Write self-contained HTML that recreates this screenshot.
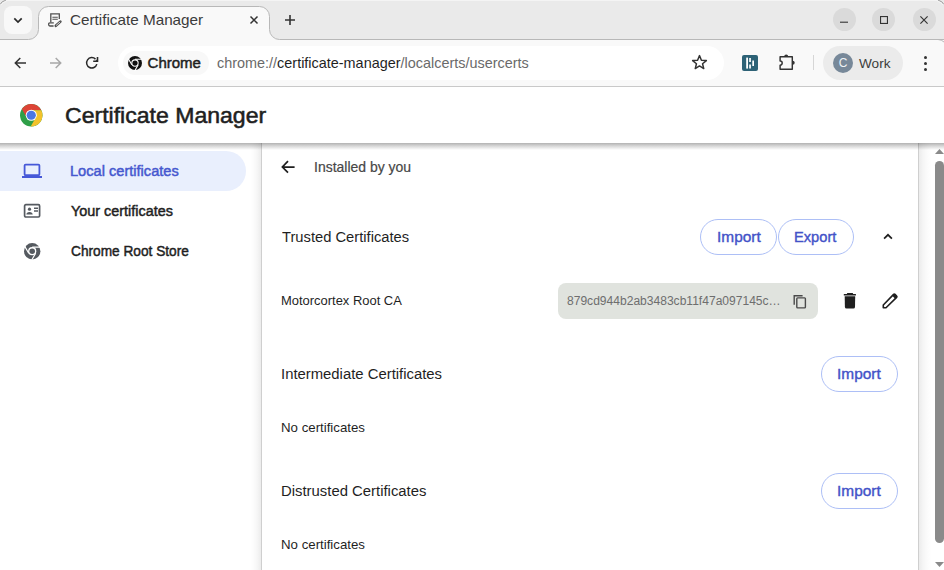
<!DOCTYPE html>
<html><head><meta charset="utf-8">
<style>
*{margin:0;padding:0;box-sizing:border-box}
html,body{width:944px;height:570px;overflow:hidden;background:#fff;font-family:"Liberation Sans",sans-serif;position:relative}
.a{position:absolute}
.t{position:absolute;white-space:nowrap;line-height:1;transform-origin:0 0}
svg{position:absolute;overflow:visible}
#titlebar{left:0;top:0;width:944px;height:40px;background:#e8e8e8}
#tabsearch{left:4px;top:6px;width:28px;height:28px;background:#f8f8f8;border-radius:8px}
#tab{left:38px;top:6px;width:232px;height:35px;background:#f9f9f9;border:1px solid #c6c6c6;border-bottom:none;border-radius:9px 9px 0 0}
#toolbar{left:0;top:40px;width:944px;height:47px;background:transparent;border-bottom:1px solid #c9c9c9}
#omni{left:118px;top:46px;width:606px;height:34px;background:#fff;border-radius:17px}
#chip{left:123px;top:51px;width:86px;height:24px;background:#f8f8f8;border-radius:12px}
.wc{top:8px;width:23px;height:23px;border-radius:50%;background:#dadada}
#work{left:823px;top:46px;width:80px;height:34px;background:#ebebeb;border-radius:17px}
#avatar{left:833px;top:53px;width:20px;height:20px;border-radius:50%;background:#778899;color:#eef2f5;font-size:12px;line-height:20px;text-align:center}
#sep{left:813px;top:55px;width:1px;height:15px;background:#d6d6d6}
#header{left:0;top:87px;width:944px;height:56px;background:#fff;z-index:2}
#hshadow{left:0;top:143px;width:944px;height:7px;background:linear-gradient(rgba(0,0,0,.30),rgba(0,0,0,.17) 40%,rgba(0,0,0,0));z-index:2}
#sel{left:0;top:151px;width:246px;height:40px;background:#e9effd;border-radius:0 20px 20px 0}
#card{left:261px;top:143px;width:658px;height:440px;background:#fff;border-left:1px solid #cfcfcf;border-right:1px solid #cfcfcf}
#lsh{left:250px;top:143px;width:11px;height:440px;background:linear-gradient(to left,rgba(0,0,0,.075),rgba(0,0,0,.035) 35%,rgba(0,0,0,.012) 70%,rgba(0,0,0,0))}
#rsh{left:919px;top:143px;width:13px;height:440px;background:linear-gradient(to right,rgba(0,0,0,.075),rgba(0,0,0,.035) 35%,rgba(0,0,0,.012) 70%,rgba(0,0,0,0))}
#strack{left:932px;top:143px;width:12px;height:427px;background:#fff}
#thumb{left:935px;top:161px;width:9px;height:382px;background:#8a8a8a;border-radius:4.5px}
.btn{position:absolute;height:36px;border:1px solid #adbff6;border-radius:18px;background:#fff}
.bt{position:absolute;white-space:nowrap;line-height:1;transform-origin:0 0;color:#4352c8;font-size:15.5px;-webkit-text-stroke:0.4px #4352c8}
#hash{left:558px;top:283px;width:260px;height:36px;background:#e0e3de;border-radius:8px}
</style></head><body>
<!-- title bar -->
<div class="a" style="left:0;top:0;width:944px;height:87px;background:#f9f9f9"></div>
<svg style="left:0;top:0" width="944" height="42" viewBox="0 0 944 42"><path d="M0 0 H944 V39.5 H279.5 A10 10 0 0 1 269.5 29.5 V16.5 A10 10 0 0 0 259.5 6.5 H48.5 A10 10 0 0 0 38.5 16.5 V29.5 A10 10 0 0 1 28.5 39.5 H0 Z" fill="#eaeaea"/><path d="M944 39.5 H279.5 A10 10 0 0 1 269.5 29.5 V16.5 A10 10 0 0 0 259.5 6.5 H48.5 A10 10 0 0 0 38.5 16.5 V29.5 A10 10 0 0 1 28.5 39.5 H0" fill="none" stroke="#b8b8b8" stroke-width="1"/><path d="M938 39.5 Q941.5 39.6 944 42" fill="none" stroke="#b8b8b8" stroke-width="1"/></svg>
<div class="a" style="left:5px;top:0;width:933px;height:1px;background:#f4f4f4"></div>
<svg style="left:0;top:0" width="10" height="10" viewBox="0 0 10 10"><path d="M0.3 4.2 Q1.5 1.2 5.8 0.3" fill="none" stroke="#9a9a9a" stroke-width="1"/><path d="M1.2 5 Q2.5 2.2 6.5 1.2" fill="none" stroke="#f6f6f6" stroke-width="1"/></svg>
<svg style="left:934px;top:0" width="10" height="10" viewBox="0 0 10 10"><path d="M9.7 4.2 Q8.5 1.2 4.2 0.3" fill="none" stroke="#9a9a9a" stroke-width="1"/><path d="M8.8 5 Q7.5 2.2 3.5 1.2" fill="none" stroke="#f6f6f6" stroke-width="1"/></svg>
<div id="tabsearch" class="a"></div>
<svg style="left:13px;top:16.5px" width="10" height="7" viewBox="0 0 10 7"><path d="M1.3 1.3 L5 5 L8.7 1.3" fill="none" stroke="#2a2a2a" stroke-width="1.7"/></svg>
<!-- tab icon -->
<svg style="left:47px;top:12px" width="16" height="16" viewBox="0 0 16 16">
<path d="M3.8 10.2 V1.9 H12.3 V7" fill="none" stroke="#505050" stroke-width="1.3"/>
<path d="M5.4 5.2 H10.8 M5.4 7.3 H10.8" stroke="#505050" stroke-width="1.1"/>
<path d="M6.8 10.9 H2.9 Q1.6 10.9 1.6 12.3 Q1.6 14 2.9 14 H6.6" fill="none" stroke="#505050" stroke-width="1.3"/>
<path d="M8.8 13.8 L13.4 9.6" stroke="#505050" stroke-width="2.6" stroke-linecap="round"/><path d="M9.4 13.2 L12.8 10.2" stroke="#f9f9f9" stroke-width="0.8" stroke-linecap="round"/>
</svg>
<div id="t_tab" class="t" style="left:70.0px;top:13.2px;font-size:14.5px;color:#3c3c3c;transform:scaleX(1.0524)">Certificate Manager</div>
<svg style="left:250px;top:16px" width="8" height="8" viewBox="0 0 8 8"><path d="M0.5 0.5 L7.5 7.5 M7.5 0.5 L0.5 7.5" stroke="#333" stroke-width="1.5"/></svg>
<svg style="left:285px;top:15px" width="10" height="10" viewBox="0 0 10 10"><path d="M5 0 V10 M0 5 H10" stroke="#333" stroke-width="1.6"/></svg>
<div class="a wc" style="left:832.5px"></div>
<div class="a wc" style="left:872.2px"></div>
<div class="a wc" style="left:912.5px"></div>
<svg style="left:840px;top:21px" width="8" height="2" viewBox="0 0 8 2"><path d="M0 1.2 H8" stroke="#333" stroke-width="1.1"/></svg>
<svg style="left:880px;top:16px" width="8" height="8" viewBox="0 0 8 8"><rect x="0.55" y="0.55" width="6.9" height="6.9" fill="none" stroke="#333" stroke-width="1.1"/></svg>
<svg style="left:920px;top:16px" width="8" height="8" viewBox="0 0 8 8"><path d="M0.4 0.4 L7.6 7.6 M7.6 0.4 L0.4 7.6" stroke="#333" stroke-width="1.15"/></svg>

<!-- toolbar -->
<div id="toolbar" class="a"></div>
<svg style="left:14px;top:57px" width="12" height="12" viewBox="0 0 12 12"><path d="M12 6 H1.5 M6.3 1 L1.3 6 L6.3 11" fill="none" stroke="#333" stroke-width="1.5"/></svg>
<svg style="left:50px;top:57px" width="12" height="12" viewBox="0 0 12 12"><path d="M0 6 H10.5 M5.7 1 L10.7 6 L5.7 11" fill="none" stroke="#a8a8a8" stroke-width="1.5"/></svg>
<svg style="left:85px;top:56px" width="14" height="14" viewBox="0 0 14 14"><path d="M11.82 8.15 A5.2 5.2 0 1 1 10.48 3.12" fill="none" stroke="#2a2a2a" stroke-width="1.5"/><path d="M8.2 5.3 H12.5 V0.9" fill="none" stroke="#2a2a2a" stroke-width="1.6"/><path d="M10.3 5.3 L12.5 3 V5.3 Z" fill="#2a2a2a"/></svg>
<div id="omni" class="a"></div>
<div id="chip" class="a"></div>
<svg style="left:128px;top:56px" width="14" height="14" viewBox="0 0 48 48">
<circle cx="24" cy="24" r="24" fill="#111"/>
<circle cx="24" cy="24" r="12.6" fill="#fff"/>
<circle cx="24" cy="24" r="9" fill="#111"/>
<path d="M24 11.4 H49 M13.1 30.3 L0.6 8.7 M34.9 30.3 L22.4 51.9" stroke="#fff" stroke-width="3.6"/>
</svg>
<div id="t_chip" class="t" style="left:147.6px;top:54.5px;font-size:15px;color:#1f1f1f;-webkit-text-stroke:0.5px #1f1f1f;transform:scaleX(1.0)">Chrome</div>
<div id="t_url" class="t" style="left:217.0px;top:56.0px;font-size:14.4px;color:#6a6a6a;transform:scaleX(1.002)">chrome://<span style="color:#1f1f1f">certificate-manager</span>/localcerts/usercerts</div>
<svg style="left:691px;top:54.2px" width="17" height="16" viewBox="0 0 24 22.6"><path d="M12 2.3 L14.7 8.8 L21.7 9.3 L16.3 13.8 L18 20.6 L12 16.9 L6 20.6 L7.7 13.8 L2.3 9.3 L9.3 8.8 Z" fill="none" stroke="#333" stroke-width="2.1" stroke-linejoin="round"/></svg>
<div class="a" style="left:742px;top:55px;width:16px;height:16px;background:#2d6276;border-radius:2px"></div>
<svg style="left:742px;top:55px" width="16" height="16" viewBox="0 0 16 16"><rect x="4.2" y="2.6" width="1.8" height="11" fill="#fff"/><rect x="7.2" y="3" width="1.7" height="4" fill="#fff"/><rect x="7.2" y="9.5" width="1.7" height="4" fill="#fff"/><rect x="10.3" y="5.5" width="1.7" height="5.5" fill="#fff"/></svg>
<svg style="left:778px;top:53px" width="19" height="19" viewBox="0 0 19 19"><path d="M2.1 3.8 H14.3 V16.3 H2.1 V12.1 A2.1 2.1 0 0 0 2.1 7.9 Z" fill="none" stroke="#333" stroke-width="1.45" stroke-linejoin="round"/><path d="M6.2 3.4 A2 2 0 0 1 10.2 3.4 Z" fill="#333"/><path d="M14.7 7.7 A2 2 0 0 1 14.7 11.7 Z" fill="#333"/></svg>
<div id="sep" class="a"></div>
<div id="work" class="a"></div>
<div id="avatar" class="a">C</div>
<div id="t_work" class="t" style="left:859.0px;top:57.1px;font-size:13.6px;color:#3c3c3c;transform:scaleX(1.0)">Work</div>
<div class="a" style="left:923.5px;top:55.5px;width:3px;height:3px;border-radius:50%;background:#333"></div>
<div class="a" style="left:923.5px;top:61.5px;width:3px;height:3px;border-radius:50%;background:#333"></div>
<div class="a" style="left:923.5px;top:67.5px;width:3px;height:3px;border-radius:50%;background:#333"></div>

<!-- page -->
<div id="sel" class="a"></div>
<div id="lsh" class="a"></div><div id="card" class="a"></div><div id="rsh" class="a"></div>
<div id="strack" class="a"></div>
<div id="thumb" class="a"></div>
<svg style="left:935px;top:149px" width="9" height="5" viewBox="0 0 9 5"><path d="M0 5 L4.5 0 L9 5Z" fill="#8a8a8a"/></svg>
<svg style="left:935px;top:562px" width="9" height="5" viewBox="0 0 9 5"><path d="M0 0 L4.5 5 L9 0Z" fill="#8a8a8a"/></svg>
<div id="header" class="a"></div><div id="hshadow" class="a"></div>
<svg style="left:19.7px;top:103.7px;z-index:3" width="22.5" height="22.5" viewBox="0 0 48 48">
<circle cx="24" cy="24" r="24" fill="#2f9f48"/>
<path d="M45.38 13.1 A24 24 0 0 0 3.87 10.93 L14.56 29.45 L24 24 L24 13.1 Z" fill="#dd4436"/>
<path d="M45.38 13.1 A24 24 0 0 0 3.87 10.93 L14.56 29.45 L24 24 L24 13.1 Z" fill="#f3c22c" transform="rotate(120 24 24)"/>
<circle cx="24" cy="24" r="11.8" fill="#fff"/>
<circle cx="24" cy="24" r="9.8" fill="#4b77e4"/>
</svg>
<div id="t_title" class="t" style="left:65.1px;top:104.5px;font-size:22.5px;color:#1f1f1f;z-index:3;-webkit-text-stroke:0.55px #1f1f1f;transform:scaleX(1.0246)">Certificate Manager</div>

<!-- sidebar -->
<svg style="left:21px;top:163px" width="22" height="16" viewBox="0 0 22 16"><rect x="3.6" y="1.6" width="14.8" height="10.6" rx="1" fill="none" stroke="#4658d8" stroke-width="1.8"/><rect x="1" y="13" width="20" height="2" fill="#4658d8"/></svg>
<div id="t_local" class="t" style="left:69.8px;top:163.0px;font-size:15.3px;color:#4658cf;-webkit-text-stroke:0.5px #4658cf;transform:scaleX(0.9548)">Local certificates</div>
<svg style="left:23px;top:203px" width="18" height="16" viewBox="0 0 18 16"><rect x="1.6" y="1.7" width="15" height="12.3" rx="1.2" fill="none" stroke="#555a60" stroke-width="1.7"/><circle cx="6.5" cy="6.2" r="1.6" fill="#555a60"/><path d="M3.3 11.6 Q3.5 9.1 6.5 9.1 Q9.5 9.1 9.7 11.6 Z" fill="#555a60"/><path d="M11 5.2 H15 M11 8 H15" stroke="#555a60" stroke-width="1.4"/></svg>
<div id="t_your" class="t" style="left:70.8px;top:203.3px;font-size:15.3px;color:#1f1f1f;-webkit-text-stroke:0.5px #1f1f1f;transform:scaleX(0.9414)">Your certificates</div>
<svg style="left:23.8px;top:242.8px" width="16.4" height="16.4" viewBox="0 0 48 48">
<circle cx="24" cy="24" r="24" fill="#555a60"/>
<circle cx="24" cy="24" r="12" fill="#fff"/>
<circle cx="24" cy="24" r="8.2" fill="#555a60"/>
<path d="M24 12.2 H48 M13.8 29.9 L1.8 9.1 M34.2 29.9 L22.2 50.7" stroke="#fff" stroke-width="3.4"/>
</svg>
<div id="t_root" class="t" style="left:70.8px;top:243.3px;font-size:15.3px;color:#1f1f1f;-webkit-text-stroke:0.5px #1f1f1f;transform:scaleX(0.8945)">Chrome Root Store</div>

<!-- card content -->
<svg style="left:281px;top:160px" width="14" height="13" viewBox="0 0 14 13"><path d="M13.6 7 H1.8 M7 1.2 L1.4 7 L7 12.6" fill="none" stroke="#1f1f1f" stroke-width="1.75"/></svg>
<div id="t_inst" class="t" style="left:313.6px;top:160.1px;font-size:14.5px;color:#474747;-webkit-text-stroke:0.2px #474747;transform:scaleX(0.964)">Installed by you</div>

<div id="t_trust" class="t" style="left:282.4px;top:228.7px;font-size:15.5px;color:#1f1f1f;transform:scaleX(0.9502)">Trusted Certificates</div>
<div class="btn" style="left:700px;top:219px;width:77px"></div>
<div id="t_imp1" class="bt" style="left:716.5px;top:228.5px;transform:scaleX(0.9956)">Import</div>
<div class="btn" style="left:778px;top:219px;width:76px"></div>
<div id="t_exp" class="bt" style="left:794.1px;top:228.5px;transform:scaleX(0.9457)">Export</div>
<svg style="left:882px;top:233px" width="12" height="7" viewBox="0 0 12 7"><path d="M2.1 5.7 L6 1.8 L9.9 5.7" fill="none" stroke="#1f1f1f" stroke-width="1.7"/></svg>

<div id="t_motor" class="t" style="left:281.1px;top:293.9px;font-size:13.3px;color:#1f1f1f;transform:scaleX(0.9734)">Motorcortex Root CA</div>
<div id="hash" class="a"></div>
<div id="t_hash" class="t" style="left:567.0px;top:295.0px;font-size:12.5px;color:#6e6e6e;transform:scaleX(0.9646)">879cd944b2ab3483cb11f47a097145c…</div>
<svg style="left:792px;top:292.5px" width="16" height="16" viewBox="0 0 16 16"><path d="M2.2 11.8 V2.7 H10.6" fill="none" stroke="#4a4a4a" stroke-width="1.4"/><rect x="4.8" y="4.9" width="8.6" height="10" rx="0.8" fill="none" stroke="#4a4a4a" stroke-width="1.4"/></svg>
<svg style="left:842px;top:292px" width="16" height="18" viewBox="0 0 16 18"><path d="M5.3 1 H10.7 L11.2 2 H13.9 V3.4 H1.8 V2 H4.8 Z" fill="#1f1f1f"/><path d="M2.7 4.3 H13.2 L13 15 Q12.9 16.5 11.4 16.5 H4.5 Q3 16.5 2.9 15 Z" fill="#1f1f1f"/></svg>
<svg style="left:881px;top:292px" width="18" height="18" viewBox="0 0 18 18"><path d="M2.3 15.7 V13 L12.6 2.4 Q13.3 1.7 14 2.4 L15.6 4 Q16.3 4.7 15.6 5.4 L5 15.7 Z" fill="none" stroke="#1f1f1f" stroke-width="1.6" stroke-linejoin="round"/><path d="M12.6 2.4 Q13.3 1.7 14 2.4 L15.6 4 Q16.3 4.7 15.6 5.4 L14.2 6.8 L11.2 3.8 Z" fill="#1f1f1f"/></svg>

<div id="t_inter" class="t" style="left:281.0px;top:366.3px;font-size:15.5px;color:#1f1f1f;transform:scaleX(0.9584)">Intermediate Certificates</div>
<div class="btn" style="left:821px;top:356px;width:77px"></div>
<div id="t_imp2" class="bt" style="left:836.9px;top:365.8px;transform:scaleX(0.9955)">Import</div>
<div id="t_no1" class="t" style="left:281.0px;top:420.9px;font-size:13.3px;color:#1f1f1f;transform:scaleX(0.997)">No certificates</div>

<div id="t_dist" class="t" style="left:281.0px;top:483.3px;font-size:15.5px;color:#1f1f1f;transform:scaleX(0.9594)">Distrusted Certificates</div>
<div class="btn" style="left:821px;top:473px;width:77px"></div>
<div id="t_imp3" class="bt" style="left:836.9px;top:482.5px;transform:scaleX(0.9955)">Import</div>
<div id="t_no2" class="t" style="left:281.0px;top:537.5px;font-size:13.3px;color:#1f1f1f;transform:scaleX(0.997)">No certificates</div>
</body></html>
